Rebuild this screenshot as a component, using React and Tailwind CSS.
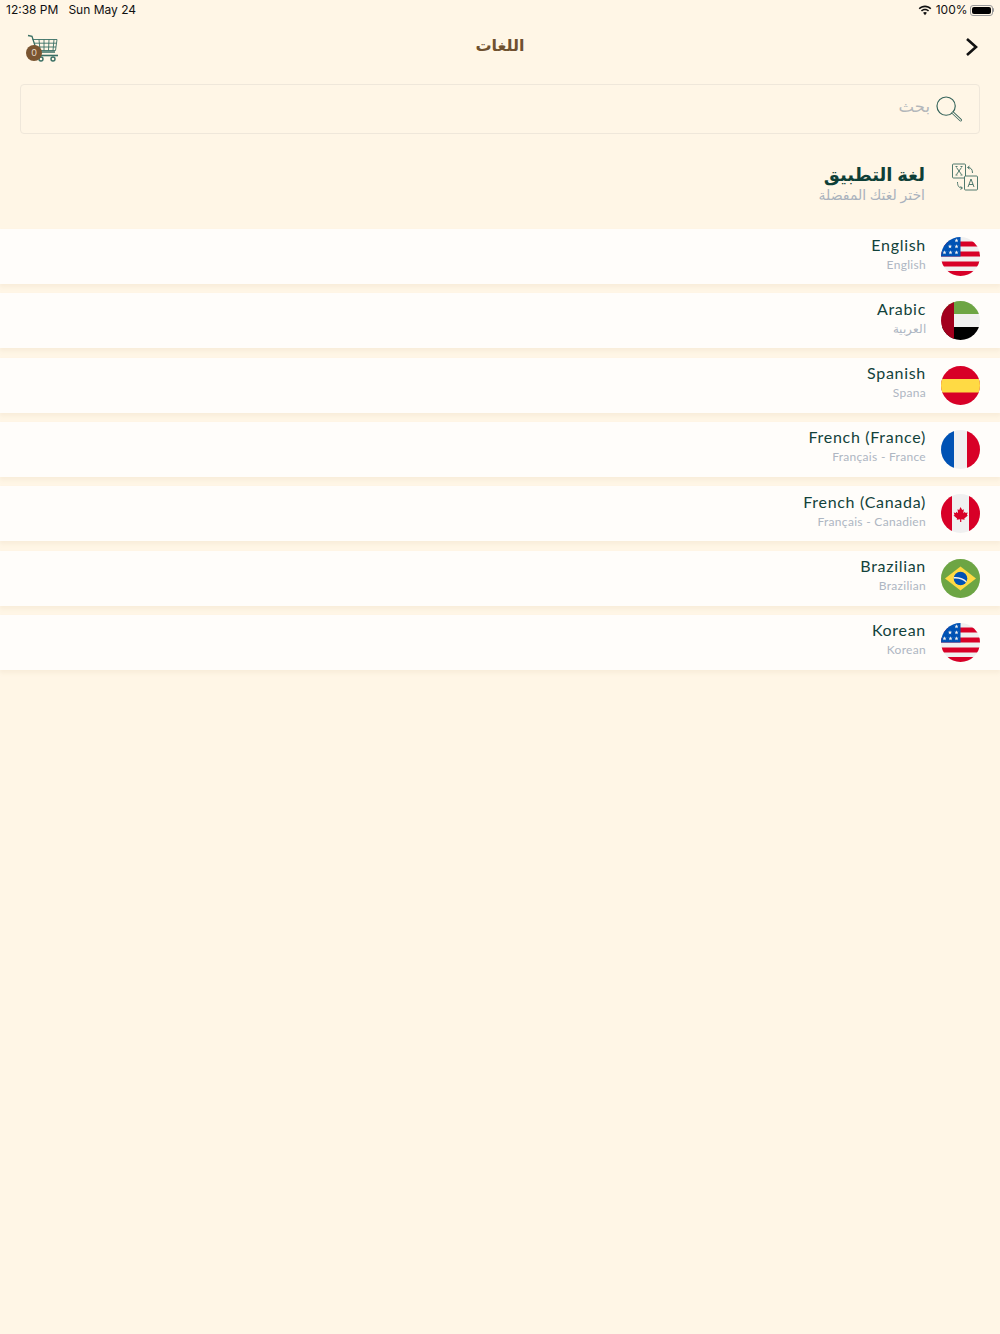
import React from "react";

const arabicFont = "font-['Noto_Sans','DejaVu_Sans',sans-serif]";

const LANGUAGES = [
  { name: "English", sub: "English", flag: "us" },
  { name: "Arabic", sub: "العربية", flag: "ae" },
  { name: "Spanish", sub: "Spana", flag: "es" },
  { name: "French (France)", sub: "Français - France", flag: "fr" },
  { name: "French (Canada)", sub: "Français - Canadien", flag: "ca" },
  { name: "Brazilian", sub: "Brazilian", flag: "br" },
  { name: "Korean", sub: "Korean", flag: "us" },
];

function Star({ x, y }) {
  const pts = [];
  for (let i = 0; i < 10; i++) {
    const r = i % 2 === 0 ? 2.2 : 0.9;
    const a = (Math.PI / 5) * i - Math.PI / 2;
    pts.push(`${x + r * Math.cos(a)},${y + r * Math.sin(a)}`);
  }
  return <polygon points={pts.join(" ")} fill="#f0f0f0" />;
}

function Flag({ code }) {
  return (
    <svg viewBox="0 0 39 39" className="w-[39px] h-[39px] rounded-full shrink-0">
      <rect width="39" height="39" fill="#f0f0f0" />
      {code === "us" && (
        <>
          <rect y="4.500" width="39" height="5" fill="#d80027" />
          <rect y="14.500" width="39" height="5" fill="#d80027" />
          <rect y="24.500" width="39" height="5" fill="#d80027" />
          <rect y="34" width="39" height="5" fill="#d80027" />
          <rect width="19.500" height="19.500" fill="#0052b4" />
          <Star x={15.500} y={3.500} />
          <Star x={9} y={9.500} />
          <Star x={15.500} y={9.500} />
          <Star x={3.500} y={15.500} />
          <Star x={9.500} y={15.500} />
          <Star x={15.500} y={15.500} />
        </>
      )}
      {code === "ae" && (
        <>
          <rect width="39" height="13" fill="#6da544" />
          <rect y="26" width="39" height="13" fill="#000000" />
          <rect width="13" height="39" fill="#a2001d" />
        </>
      )}
      {code === "es" && (
        <>
          <rect width="39" height="39" fill="#d80027" />
          <rect y="13" width="39" height="13.500" fill="#ffda44" />
        </>
      )}
      {code === "fr" && (
        <>
          <rect width="13" height="39" fill="#0052b4" />
          <rect x="26" width="13" height="39" fill="#d80027" />
        </>
      )}
      {code === "ca" && (
        <>
          <rect width="11" height="39" fill="#d80027" />
          <rect x="28" width="11" height="39" fill="#d80027" />
          <path
            d="M19.500 13l1.700 3 1.700-.8-.6 4 1.700-1.500.5 1.300 2.200-.4-.8 2.400 1 .6-3.600 2.900.4 1.200-3.400-.5V28h-1.200v-2.800l-3.400.5.4-1.200-3.600-2.900 1-.6-.8-2.400 2.200.4.5-1.300 1.700 1.500-.6-4 1.700.8z"
            fill="#d80027"
          />
        </>
      )}
      {code === "br" && (
        <>
          <rect width="39" height="39" fill="#6da544" />
          <polygon points="19.500,7.500 35,19.500 19.500,31.500 4,19.500" fill="#ffda44" />
          <circle cx="19.500" cy="19.500" r="6.800" fill="#0052b4" />
          <path d="M12.900 18c3.800-.4 9.400.6 12.700 4.200l-.6 1.300c-3.200-3.300-8.500-4.300-12.300-3.800z" fill="#f0f0f0" />
        </>
      )}
    </svg>
  );
}

function Cart() {
  return (
    <svg viewBox="0 0 34 30" className="w-[34px] h-[30px]" fill="none" stroke="#3a6f64" strokeWidth="0.900">
      <path d="M2 2.500l4 .8 5 15.700h18" strokeWidth="1.300" />
      <path d="M6.500 6.500H31l-1.500 11H10.500" />
      <path d="M8 10.200h22.500M9 14h21" />
      <path d="M13 6.500l1 11M18 6.500v11M23 6.500l-.5 11M28 6.500l-1 11" />
      <path d="M11 22.500h21" strokeWidth="1.600" />
      <circle cx="15" cy="26" r="2" strokeWidth="1.400" />
      <circle cx="27" cy="26" r="2" strokeWidth="1.400" />
    </svg>
  );
}

function TranslateIcon() {
  return (
    <svg viewBox="0 0 26 28" className="w-[26px] h-[28px]" fill="none" stroke="#3c6b60" strokeWidth="0.900">
      <rect x="0.500" y="1" width="13" height="14" rx="1" />
      <rect x="12.500" y="13" width="13" height="14" rx="1" fill="#fff6e6" />
      <path d="M4.500 4.500l5 7M9.500 4.500l-5 7M3.500 3.500h2M8.500 3.500h2M3.500 12h2M8.500 12h2" />
      <path d="M16 4.500c3 0 4.500 2 4.500 5.500M15.500 4.500l2-1.500M15.500 4.500l2 1.500" />
      <path d="M10 25c-3 0-4.500-2-4.500-6M10.500 25l-2-1.500M10.500 25l-2 1.500" />
      <path d="M16 24l3-8 3 8M17 21.500h4" />
    </svg>
  );
}

function SearchIcon() {
  return (
    <svg viewBox="0 0 27 27" className="w-[26px] h-[26px]" fill="none" stroke="#35635a">
      <circle cx="10.500" cy="10.500" r="9.500" strokeWidth="1.200" />
      <path d="M17.500 17.500l8 7.500" strokeWidth="2.800" strokeLinecap="round" />
      <path d="M17.500 17.500l8 7.500" strokeWidth="1.200" stroke="#fff6e6" strokeLinecap="round" />
    </svg>
  );
}

function StatusBar() {
  return (
    <div dir="ltr" className="h-[20px] flex items-center justify-between px-[6px] text-[12px] text-[#111] font-['Inter',sans-serif]">
      <div className="flex gap-[10px]">
        <span>12:38 PM</span>
        <span>Sun May 24</span>
      </div>
      <div className="flex items-center gap-[4px]">
        <svg viewBox="0 0 16 12" className="w-[14px] h-[11px]" fill="#111">
          <path d="M8 2.200c2.300 0 4.400.9 6 2.400l1.200-1.300C13.300 1.400 10.800.3 8 .3S2.700 1.400.8 3.300L2 4.600c1.600-1.500 3.700-2.400 6-2.400z" />
          <path d="M8 5.800c1.300 0 2.500.5 3.400 1.400l1.300-1.300C11.400 4.700 9.800 4 8 4s-3.400.7-4.700 1.900l1.300 1.300C5.500 6.300 6.700 5.800 8 5.800z" />
          <path d="M8 7.800c-.9 0-1.600.3-2.200.9L8 11.500l2.200-2.800c-.6-.6-1.300-.9-2.200-.9z" />
        </svg>
        <span>100%</span>
        <div className="flex items-center -ml-[2px]">
          <div className="w-[23px] h-[11px] rounded-[3px] border border-[#9a9a9a] p-[1px]">
            <div className="w-full h-full rounded-[2px] bg-[#000]" />
          </div>
          <div className="w-[1.500px] h-[4px] bg-[#9a9a9a] rounded-r-sm" />
        </div>
      </div>
    </div>
  );
}

export default function App() {
  return (
    <div className="w-full min-h-[1334px] bg-[#fff6e6] font-['Lato',sans-serif]">
      <StatusBar />

      {/* Header */}
      <div dir="rtl" className="h-[54px] grid grid-cols-3 items-center px-[21px]">
        <svg viewBox="0 0 14 20" className="w-[14px] h-[20px]" fill="none" stroke="#111" strokeWidth="2.600">
          <path d="M2 2l9 8-9 8" />
        </svg>
        <h1 className={`text-[16px] font-bold text-[#6f5130] text-center -mt-[4px] ${arabicFont}`}>اللغات</h1>
        <div className="relative justify-self-end ml-[5px] w-[34px] h-[32px] pt-[2px]">
          <Cart />
          <span className="absolute left-0 top-[14px] w-[16px] h-[16px] rounded-full bg-[#7a5531] text-[#e8dccb] text-[9px] leading-[16px] text-center">
            0
          </span>
        </div>
      </div>

      {/* Search */}
      <div className="px-[20px] mt-[10px]">
        <div dir="rtl" className="h-[50px] flex items-center gap-[6px] pr-[17px] border border-[#efe7da] rounded-[4px]">
          <SearchIcon />
          <span className={`text-[16.500px] text-[#b3b6ba] -mt-[6px] ${arabicFont}`}>بحث</span>
        </div>
      </div>

      {/* Section heading */}
      <div dir="rtl" className="flex items-start gap-[27px] pr-[22px] mt-[29px]">
        <TranslateIcon />
        <div className="-mt-[1px]">
          <div className={`text-[18px] leading-[24px] font-bold text-[#0e3f37] ${arabicFont}`}>لغة التطبيق</div>
          <div className={`text-[14px] leading-[18px] text-[#aab2bd] ${arabicFont}`}>اختر لغتك المفضلة</div>
        </div>
      </div>

      {/* Languages */}
      <div className="flex flex-col gap-[9.330px] mt-[25px]">
        {LANGUAGES.map((lang) => (
          <div
            key={lang.name}
            dir="rtl"
            className="h-[55px] flex items-center gap-[15px] pr-[20px] bg-[#fffdfa] shadow-[0_3px_4px_rgba(200,170,130,0.12)]"
          >
            <Flag code={lang.flag} />
            <div className="-mt-[5px]">
              <div className="text-[16px] leading-[20px] tracking-[0.7px] text-[#12423a]">{lang.name}</div>
              <div className="text-[12px] leading-[18px] tracking-[0.3px] text-[#aeb6c2] text-right mt-[1px]">
                {lang.sub}
              </div>
            </div>
          </div>
        ))}
      </div>
    </div>
  );
}
